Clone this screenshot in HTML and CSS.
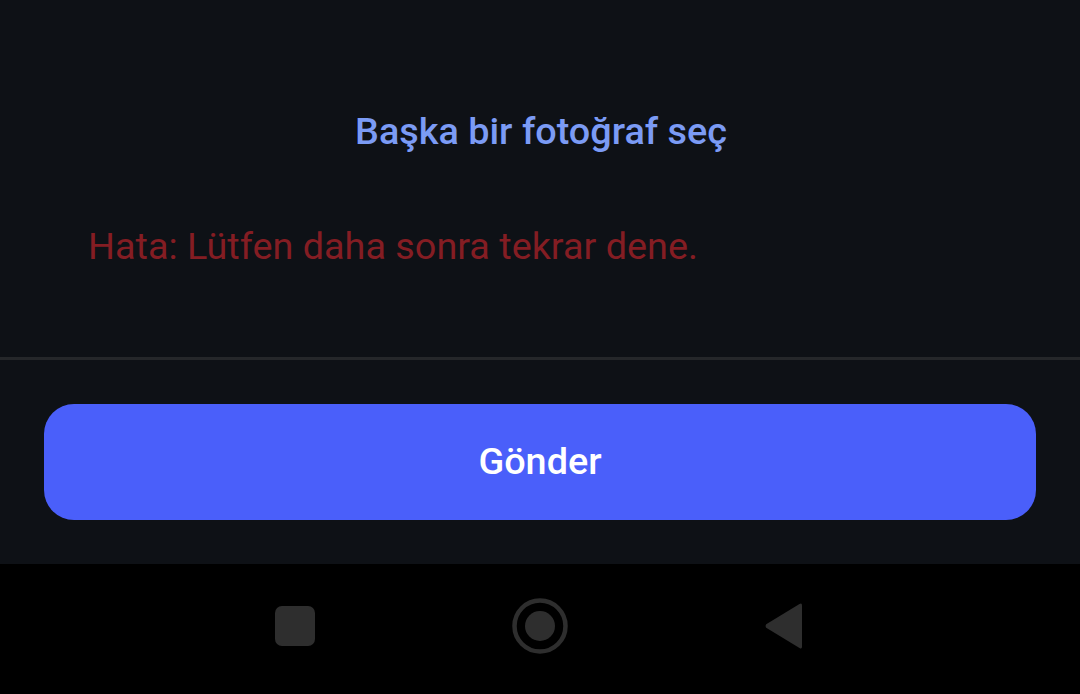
FILE: index.html
```html
<!DOCTYPE html>
<html lang="tr">

<head>
    <meta charset="UTF-8">
    <meta name="viewport" content="width=device-width, initial-scale=1.0">
    <title>Gönder</title>
    <link rel="stylesheet" href="styles.css">
</head>

<body>
    <main class="content">
        <div class="upload-section">
            <a class="change-photo" href="#">Başka bir fotoğraf seç</a>
            <p class="error-message">Hata: Lütfen daha sonra tekrar dene.</p>
        </div>

        <div class="submit-section">
            <button type="button" class="submit-btn">Gönder</button>
        </div>
    </main>

    <nav class="nav-bar">
        <svg class="nav-icon" width="40" height="40" viewBox="0 0 40 40">
            <rect x="0" y="0" width="40" height="40" rx="7" fill="#2e2e2e" />
        </svg>
        <svg class="nav-icon" width="56" height="56" viewBox="0 0 56 56">
            <circle cx="28" cy="28" r="25.5" fill="none" stroke="#2e2e2e" stroke-width="4.5" />
            <circle cx="28" cy="28" r="15" fill="#2e2e2e" />
        </svg>
        <svg class="nav-icon" width="38" height="46" viewBox="0 0 38 46">
            <path d="M37 2.5 V43.5 Q37 46.5 34.5 45 L1.2 24.8 Q0 23 1.2 21.2 L34.5 1 Q37 -0.5 37 2.5 Z" fill="#2e2e2e" />
        </svg>
    </nav>
</body>

</html>
```

FILE: styles.css
```css
* {
    margin: 0;
    padding: 0;
    box-sizing: border-box;
}

body {
    font-family: Roboto, sans-serif;
    background: #000000;
    height: 694px;
    display: flex;
    flex-direction: column;
    overflow: hidden;
}

.content {
    height: 564px;
    background: #0e1116;
    display: flex;
    flex-direction: column;
}

.upload-section {
    height: 360px;
    border-bottom: 3px solid #25272a;
    padding-top: 108px;
}

.change-photo {
    display: block;
    padding-left: 2px;
    text-align: center;
    font-size: 37.8px;
    line-height: 46px;
    font-weight: 500;
    color: #7b9bf5;
    text-decoration: none;
}

.error-message {
    margin-top: 69px;
    padding-left: 88px;
    font-size: 37.8px;
    line-height: 46px;
    color: #841d23;
}

.submit-section {
    padding: 44px 44px 0;
}

.submit-btn {
    display: block;
    width: 100%;
    height: 116px;
    padding-bottom: 2px;
    background: #4a5ffa;
    border: none;
    border-radius: 30px;
    color: white;
    font-family: inherit;
    font-size: 37.8px;
    font-weight: 500;
    cursor: pointer;
}

.nav-bar {
    height: 130px;
    padding: 0 2px 6px 0;
    display: flex;
    align-items: center;
    justify-content: center;
    gap: 197px;
}

.nav-icon {
    display: block;
}
```
